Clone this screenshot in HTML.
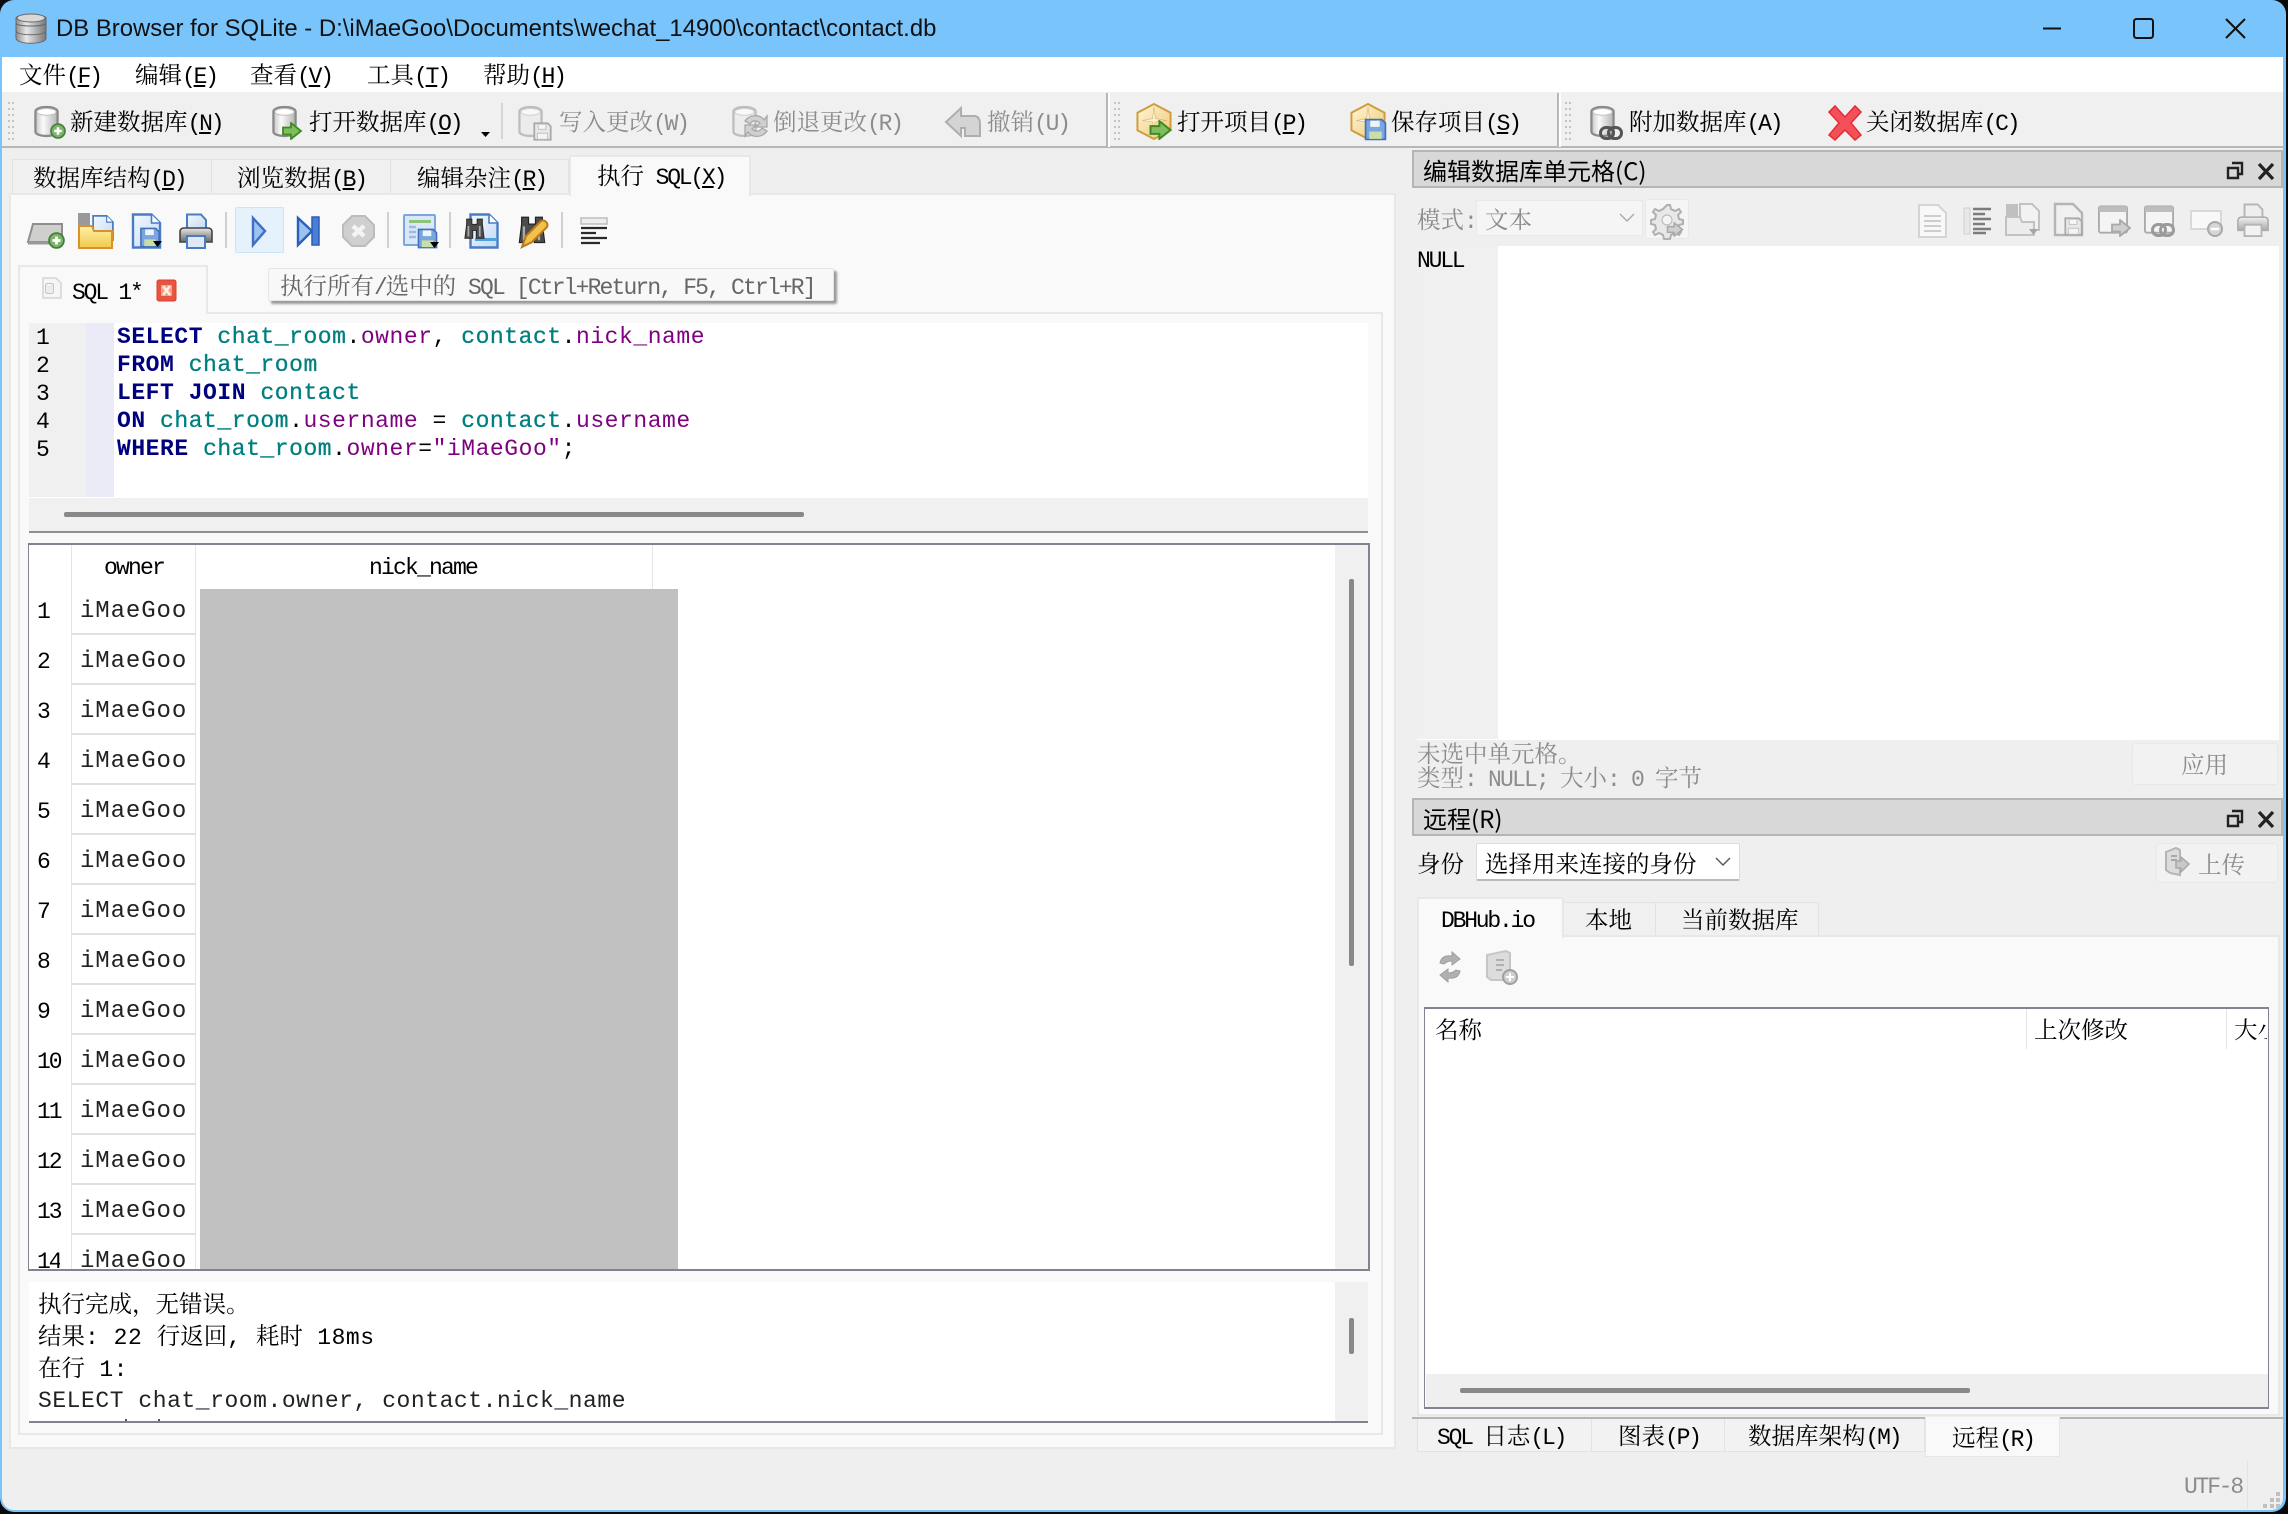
<!DOCTYPE html>
<html lang="zh"><head><meta charset="utf-8"><title>DB Browser for SQLite</title>
<style>
html,body{margin:0;padding:0;background:#0a0a0a;width:2288px;height:1514px;overflow:hidden}
#w{position:absolute;left:0;top:0;width:2286px;height:1512px;background:#79c4fb;border-radius:14px;overflow:hidden}
.b{position:absolute;box-sizing:border-box}
.t{position:absolute;white-space:pre;height:30px;line-height:30px;font-size:23.5px;color:#000;font-family:"Noto Serif CJK SC","Liberation Serif",serif}
.t i{font-style:normal;font-family:"Liberation Mono",monospace;font-size:23px;letter-spacing:-2.2px}
.t u{text-underline-offset:2px}
.g{color:#8c8c8c}
.s{font-family:"Noto Sans CJK SC","Liberation Sans",sans-serif;font-size:24px}
.c{position:absolute;white-space:pre;height:28px;font:23px/28px "Liberation Mono",monospace;letter-spacing:.54px;color:#000}
.c b{color:#00007f}.c a{color:#007f7f;-webkit-text-stroke:.3px #007f7f}.c em{font-style:normal;color:#7f007f}
.t i.m{font-family:"Liberation Mono",monospace;font-size:23px;letter-spacing:.54px}
.r{position:absolute;white-space:pre;font:24px/30px "Liberation Mono",monospace;letter-spacing:.9px;color:#222;left:80px}
.n{position:absolute;white-space:pre;font:23px/30px "Liberation Mono",monospace;letter-spacing:-2.1px;color:#000;left:37px}
</style></head><body>
<div id="w">
<!-- content background -->
<div class="b" style="left:2px;top:57px;width:2281px;height:1453px;background:#efefef;border-radius:0 0 12px 12px"></div>
<!-- menu -->
<div class="b" style="left:2px;top:57px;width:2281px;height:36px;background:#fff"></div>
<div class="b" style="left:2px;top:92px;width:2281px;height:2px;background:#f0f0f0"></div>
<!-- toolbar -->
<div class="b" style="left:2px;top:94px;width:2281px;height:52px;background:#f0f0f0"></div>
<div class="b" style="left:2px;top:146px;width:2281px;height:2px;background:#b7b7b7"></div>
<div class="b" style="left:1106px;top:93px;width:2px;height:54px;background:#b7b7b7"></div>
<div class="b" style="left:1108px;top:93px;width:2px;height:54px;background:#fff"></div>
<div class="b" style="left:1557px;top:93px;width:2px;height:54px;background:#b7b7b7"></div>
<div class="b" style="left:1559px;top:93px;width:2px;height:54px;background:#fff"></div>
<!-- left pane -->
<div class="b" style="left:12px;top:159px;width:200px;height:36px;background:#f0f0f0;border:1px solid #e2e2e2"></div>
<div class="b" style="left:212px;top:159px;width:179px;height:36px;background:#f0f0f0;border:1px solid #e2e2e2;border-left:0"></div>
<div class="b" style="left:391px;top:159px;width:178px;height:36px;background:#f0f0f0;border:1px solid #e2e2e2;border-left:0"></div>
<div class="b" style="left:9px;top:193px;width:1387px;height:1256px;background:#f9f9f9;border:2px solid #e8e8e8"></div>
<div class="b" style="left:569px;top:155px;width:182px;height:41px;background:#f9f9f9;border:2px solid #e8e8e8;border-bottom:0"></div>
<div class="b" style="left:18px;top:312px;width:1365px;height:1123px;background:#f9f9f9;border:2px solid #e8e8e8"></div>
<div class="b" style="left:18px;top:265px;width:190px;height:49px;background:#f9f9f9;border:2px solid #e8e8e8;border-bottom:0"></div>
<!-- exec hover -->
<div class="b" style="left:235px;top:207px;width:49px;height:46px;background:#e5f1fb;border:1px solid #cce4f7;border-radius:2px"></div>
<!-- tooltip -->
<div class="b" style="left:268px;top:268px;width:566px;height:33px;background:#f8f8f8;border:1px solid #e6e6e6;border-radius:2px;box-shadow:3px 3px 2px #9a9a9a"></div>
<!-- editor -->
<div class="b" style="left:29px;top:323px;width:1339px;height:175px;background:#fff"></div>
<div class="b" style="left:29px;top:323px;width:57px;height:174px;background:#f0f0f0"></div>
<div class="b" style="left:86px;top:323px;width:28px;height:174px;background:#ebebf7"></div>
<div class="b" style="left:29px;top:498px;width:1339px;height:33px;background:#f0f0f0"></div>
<div class="b" style="left:64px;top:512px;width:740px;height:5px;background:#888;border-radius:2px"></div>
<div class="b" style="left:29px;top:531px;width:1339px;height:2px;background:#8f8f8f"></div>
<!-- table -->
<div class="b" style="left:28px;top:543px;width:1342px;height:728px;background:#fff;border:2px solid #83838f;border-left-width:1px"></div>
<div class="b" style="left:1335px;top:545px;width:33px;height:724px;background:#f0f0f0"></div>
<div class="b" style="left:1349px;top:579px;width:5px;height:387px;background:#888;border-radius:2px"></div>
<div class="b" style="left:71px;top:545px;width:1px;height:724px;background:#e4e4e4"></div>
<div class="b" style="left:195px;top:545px;width:1px;height:724px;background:#e4e4e4"></div>
<div class="b" style="left:652px;top:545px;width:1px;height:44px;background:#e4e4e4"></div>
<div class="b" style="left:71px;top:633px;width:125px;height:2px;background:#e0e0e0"></div>
<div class="b" style="left:71px;top:683px;width:125px;height:2px;background:#e0e0e0"></div>
<div class="b" style="left:71px;top:733px;width:125px;height:2px;background:#e0e0e0"></div>
<div class="b" style="left:71px;top:783px;width:125px;height:2px;background:#e0e0e0"></div>
<div class="b" style="left:71px;top:833px;width:125px;height:2px;background:#e0e0e0"></div>
<div class="b" style="left:71px;top:883px;width:125px;height:2px;background:#e0e0e0"></div>
<div class="b" style="left:71px;top:933px;width:125px;height:2px;background:#e0e0e0"></div>
<div class="b" style="left:71px;top:983px;width:125px;height:2px;background:#e0e0e0"></div>
<div class="b" style="left:71px;top:1033px;width:125px;height:2px;background:#e0e0e0"></div>
<div class="b" style="left:71px;top:1083px;width:125px;height:2px;background:#e0e0e0"></div>
<div class="b" style="left:71px;top:1133px;width:125px;height:2px;background:#e0e0e0"></div>
<div class="b" style="left:71px;top:1183px;width:125px;height:2px;background:#e0e0e0"></div>
<div class="b" style="left:71px;top:1233px;width:125px;height:2px;background:#e0e0e0"></div>
<div class="b" style="left:200px;top:589px;width:478px;height:680px;background:#c1c1c1"></div>
<!-- results -->
<div class="b" style="left:29px;top:1282px;width:1339px;height:141px;background:#fff;border-bottom:2px solid #83838f;overflow:hidden">
  <div class="b" style="left:96px;top:137px;width:2px;height:2px;background:#555"></div>
  <div class="b" style="left:129px;top:137px;width:2px;height:2px;background:#555"></div>
</div>
<div class="b" style="left:1335px;top:1282px;width:33px;height:139px;background:#f0f0f0"></div>
<div class="b" style="left:1349px;top:1318px;width:5px;height:36px;background:#888;border-radius:2px"></div>

<!-- right dock -->
<div class="b" style="left:1412px;top:150px;width:871px;height:38px;background:#d8d8d8;border:2px solid #b5b5b5"></div>
<div class="b" style="left:1476px;top:200px;width:167px;height:36px;background:#f5f5f5;border:1px solid #e8e8e8;border-radius:2px"></div>
<div class="b" style="left:1645px;top:199px;width:44px;height:40px;background:#f5f5f5;border:1px solid #e8e8e8;border-radius:3px"></div>
<div class="b" style="left:1417px;top:246px;width:862px;height:494px;background:#fff"></div>
<div class="b" style="left:1417px;top:246px;width:81px;height:493px;background:#f0f0f0"></div>
<div class="b" style="left:2132px;top:743px;width:146px;height:42px;background:#f2f2f2;border:1px solid #e8e8e8;border-radius:3px"></div>
<div class="b" style="left:1412px;top:798px;width:871px;height:38px;background:#d8d8d8;border:2px solid #b5b5b5"></div>
<div class="b" style="left:1476px;top:843px;width:264px;height:38px;background:#fff;border:1px solid #dcdcdc;border-bottom:2px solid #bbb;border-radius:2px"></div>
<div class="b" style="left:2156px;top:843px;width:122px;height:40px;background:#f2f2f2;border:1px solid #e8e8e8;border-radius:3px"></div>
<!-- remote tabs -->
<div class="b" style="left:1564px;top:902px;width:92px;height:34px;background:#f0f0f0;border:1px solid #e2e2e2;border-left:0"></div>
<div class="b" style="left:1656px;top:902px;width:163px;height:34px;background:#f0f0f0;border:1px solid #e2e2e2;border-left:0"></div>
<div class="b" style="left:1417px;top:935px;width:863px;height:481px;background:#f9f9f9;border:2px solid #e8e8e8"></div>
<div class="b" style="left:1417px;top:897px;width:147px;height:41px;background:#f9f9f9;border:2px solid #e8e8e8;border-bottom:0"></div>
<div class="b" style="left:1424px;top:1007px;width:845px;height:402px;background:#fff;border:2px solid #83838f;border-width:2px 1px"></div>
<div class="b" style="left:1426px;top:1374px;width:842px;height:33px;background:#efefef"></div>
<div class="b" style="left:1460px;top:1388px;width:510px;height:5px;background:#888;border-radius:2px"></div>
<div class="b" style="left:2026px;top:1009px;width:1px;height:40px;background:#e4e4e4"></div>
<div class="b" style="left:2226px;top:1009px;width:1px;height:40px;background:#e4e4e4"></div>
<!-- bottom tabs -->
<div class="b" style="left:1412px;top:1417px;width:871px;height:2px;background:#b5b5b5"></div>
<div class="b" style="left:1417px;top:1419px;width:175px;height:33px;background:#f2f2f2;border:1px solid #e2e2e2;border-top:0"></div>
<div class="b" style="left:1592px;top:1419px;width:133px;height:33px;background:#f2f2f2;border:1px solid #e2e2e2;border-top:0;border-left:0"></div>
<div class="b" style="left:1725px;top:1419px;width:200px;height:33px;background:#f2f2f2;border:1px solid #e2e2e2;border-top:0;border-left:0"></div>
<div class="b" style="left:1925px;top:1417px;width:135px;height:40px;background:#f9f9f9;border:1px solid #e6e6e6;border-top:0"></div>
<div class="b" style="left:2247px;top:1461px;width:1px;height:48px;background:#e2e2e2"></div>

<!-- icons -->
<svg class="b" style="left:0;top:0" width="2288" height="1514" viewBox="0 0 2288 1514">
<defs>
<linearGradient id="cg" x1="0" x2="1" y1="0" y2="0"><stop offset="0" stop-color="#c8c8c8"/><stop offset=".35" stop-color="#fafafa"/><stop offset="1" stop-color="#b4b4b4"/></linearGradient>
<linearGradient id="dg" x1="0" x2="1" y1="0" y2="0"><stop offset="0" stop-color="#8e8e8e"/><stop offset=".35" stop-color="#e8e8e8"/><stop offset="1" stop-color="#777"/></linearGradient>
<linearGradient id="fy" x1="0" x2="0" y1="0" y2="1"><stop offset="0" stop-color="#fff0a8"/><stop offset="1" stop-color="#f2c94c"/></linearGradient>
<linearGradient id="bp" x1="0" x2="1" y1="0" y2="1"><stop offset="0" stop-color="#f4f9ff"/><stop offset="1" stop-color="#c2d9f4"/></linearGradient>
<linearGradient id="hx" x1="0" x2="1" y1="0" y2="1"><stop offset="0" stop-color="#fff6d8"/><stop offset="1" stop-color="#eec873"/></linearGradient>
<linearGradient id="pr" x1="0" x2="0" y1="0" y2="1"><stop offset="0" stop-color="#e8e8e8"/><stop offset="1" stop-color="#666"/></linearGradient>
<linearGradient id="gp" x1="0" x2="0" y1="0" y2="1"><stop offset="0" stop-color="#f0f0f0"/><stop offset="1" stop-color="#aaa"/></linearGradient>
<symbol id="cyl" viewBox="0 0 26 34"><path d="M1.5 6.5C1.5 .5 24.5 .5 24.5 6.5V27.5C24.5 33.5 1.5 33.5 1.5 27.5Z" fill="url(#cg)" stroke="#8a8a8a" stroke-width="2.4"/><ellipse cx="13" cy="7" rx="10" ry="3.5" fill="#fff" stroke="#c0c0c0"/></symbol>
<symbol id="cylg" viewBox="0 0 26 34"><path d="M1.5 6.5C1.5 .5 24.5 .5 24.5 6.5V27.5C24.5 33.5 1.5 33.5 1.5 27.5Z" fill="#ececec" stroke="#bdbdbd" stroke-width="2.4"/><ellipse cx="13" cy="7" rx="10" ry="3.5" fill="#f8f8f8" stroke="#d0d0d0"/></symbol>
<symbol id="plus" viewBox="0 0 16 16"><circle cx="8" cy="8" r="7" fill="#7db36a" stroke="#3f7f35" stroke-width="1.6"/><path d="M8 4.2V11.8M4.2 8H11.8" stroke="#fff" stroke-width="2.6"/></symbol>
<symbol id="arr" viewBox="0 0 20 18"><path d="M1 5.5H9V1L19 9 9 17V12.5H1Z" fill="#7fbe5e" stroke="#3f8a22" stroke-width="1.8"/></symbol>
<symbol id="arrg" viewBox="0 0 20 18"><path d="M1 5.5H9V1L19 9 9 17V12.5H1Z" fill="#cfcfcf" stroke="#a8a8a8" stroke-width="1.8"/></symbol>
<symbol id="disk" viewBox="0 0 22 22"><path d="M1.5 1.5H17L20.5 5V20.5H1.5Z" fill="#7aa5de" stroke="#3f70bd" stroke-width="1.6"/><rect x="6" y="2.5" width="9" height="6" fill="#eef4fb"/><rect x="5" y="13" width="12" height="7" fill="#c8e0a8"/></symbol>
<symbol id="diskg" viewBox="0 0 22 22"><path d="M1.5 1.5H17L20.5 5V20.5H1.5Z" fill="#e8e8e8" stroke="#a8a8a8" stroke-width="2"/><rect x="6" y="2.5" width="9" height="6" fill="#f6f6f6" stroke="#bbb"/><rect x="5" y="13" width="12" height="7" fill="#f4f4f4" stroke="#bbb"/></symbol>
<symbol id="page" viewBox="0 0 30 36"><path d="M1.5 1.5H20L28.5 10V34.5H1.5Z" fill="url(#bp)" stroke="#4a7cc4" stroke-width="2.4"/><path d="M20 1.5V10H28.5" fill="#fff" stroke="#4a7cc4" stroke-width="1.6"/></symbol>
<symbol id="hex" viewBox="0 0 36 38"><path d="M18 1L35 10V28L18 37 1 28V10Z" fill="url(#hx)" stroke="#cf9c3d" stroke-width="2"/><path d="M18 4L19.5 16 31 18 19 19.5 18 30 16.6 19.5 6 18 16.6 16Z" fill="#fff" opacity=".55" stroke="#c08c30" stroke-width=".6"/></symbol>
<symbol id="bino" viewBox="0 0 24 26"><path d="M3 1H9V7H15V1H21V7L23 23H14V14H10V23H1L3 7Z" fill="#4c4c4c" stroke="#222" stroke-width="1"/><path d="M5 9V21M18 9V21" stroke="#aaa" stroke-width="2"/></symbol>
<symbol id="prt" viewBox="0 0 36 36"><path d="M9 16V1.5H23L28 7V16Z" fill="url(#bp)" stroke="#4a7cc4" stroke-width="2"/><path d="M2 29V19C2 16 4 15 6 15H30C32 15 34 16 34 19V29H27V25H9V29Z" fill="url(#pr)" stroke="#444" stroke-width="1.6"/><rect x="9" y="23" width="18" height="12" fill="#dfe9f6" stroke="#4a7cc4" stroke-width="2"/></symbol>
<symbol id="prtg" viewBox="0 0 36 36"><path d="M9 16V1.5H23L28 7V16Z" fill="#eee" stroke="#b5b5b5" stroke-width="2"/><path d="M2 29V19C2 16 4 15 6 15H30C32 15 34 16 34 19V29H27V25H9V29Z" fill="url(#gp)" stroke="#aaa" stroke-width="1.6"/><rect x="9" y="23" width="18" height="12" fill="#f2f2f2" stroke="#b5b5b5" stroke-width="2"/></symbol>
<symbol id="lnk" viewBox="0 0 24 14"><rect x="1.5" y="1.5" width="13" height="11" rx="5.5" fill="none" stroke="#555" stroke-width="3"/><rect x="9.5" y="1.5" width="13" height="11" rx="5.5" fill="none" stroke="#555" stroke-width="3"/></symbol>
<symbol id="lnkg" viewBox="0 0 24 14"><rect x="1.5" y="1.5" width="13" height="11" rx="5.5" fill="none" stroke="#9a9a9a" stroke-width="3"/><rect x="9.5" y="1.5" width="13" height="11" rx="5.5" fill="none" stroke="#9a9a9a" stroke-width="3"/></symbol>
<symbol id="win" viewBox="0 0 32 30"><rect x="1" y="1" width="30" height="28" rx="2" fill="#f4f4f4" stroke="#aaa" stroke-width="2"/><rect x="1" y="1" width="30" height="6" fill="#bdbdbd"/></symbol>
</defs>
<!-- title icon -->
<g stroke="#666" stroke-width="1"><path d="M16 33C16 29 46 29 46 33V38C46 45 16 45 16 38Z" fill="url(#dg)"/><path d="M16 24C16 20 46 20 46 24V31C46 36 16 36 16 31Z" fill="url(#dg)"/><path d="M16 18C16 14 46 14 46 18V23C46 27 16 27 16 23Z" fill="url(#dg)"/><ellipse cx="31" cy="18" rx="14" ry="4" fill="#d8d8d8"/></g>
<!-- window buttons -->
<path d="M2043 28.5H2061" stroke="#111" stroke-width="2"/>
<rect x="2134" y="19" width="19" height="19" rx="2.5" fill="none" stroke="#111" stroke-width="2"/>
<path d="M2226 19L2245 38M2245 19L2226 38" stroke="#111" stroke-width="2"/>
<!-- grips -->
<g fill="#c4c4c4"><path d="M8 102h2v2h-2zM12 102h2v2h-2zM8 108h2v2h-2zM12 108h2v2h-2zM8 114h2v2h-2zM12 114h2v2h-2zM8 120h2v2h-2zM12 120h2v2h-2zM8 126h2v2h-2zM12 126h2v2h-2zM8 132h2v2h-2zM12 132h2v2h-2zM8 138h2v2h-2zM12 138h2v2h-2z"/><path d="M1114 102h2v2h-2zM1118 102h2v2h-2zM1114 108h2v2h-2zM1118 108h2v2h-2zM1114 114h2v2h-2zM1118 114h2v2h-2zM1114 120h2v2h-2zM1118 120h2v2h-2zM1114 126h2v2h-2zM1118 126h2v2h-2zM1114 132h2v2h-2zM1118 132h2v2h-2zM1114 138h2v2h-2zM1118 138h2v2h-2z"/><path d="M1565 102h2v2h-2zM1569 102h2v2h-2zM1565 108h2v2h-2zM1569 108h2v2h-2zM1565 114h2v2h-2zM1569 114h2v2h-2zM1565 120h2v2h-2zM1569 120h2v2h-2zM1565 126h2v2h-2zM1569 126h2v2h-2zM1565 132h2v2h-2zM1569 132h2v2h-2zM1565 138h2v2h-2zM1569 138h2v2h-2z"/></g>
<!-- toolbar 1 -->
<use href="#cyl" x="34" y="105" width="25" height="33"/><use href="#plus" x="50" y="123" width="16" height="16"/>
<use href="#cyl" x="272" y="105" width="25" height="33"/><use href="#arr" x="281" y="122" width="22" height="18"/>
<path d="M481 132h9l-4.500 5z" fill="#000"/>
<rect x="501" y="103" width="2" height="36" fill="#d5d5d5"/>
<use href="#cylg" x="518" y="105" width="25" height="33"/><use href="#diskg" x="532" y="122" width="21" height="19"/>
<use href="#cylg" x="732" y="105" width="25" height="33"/><path d="M745 121C750 114 760 114 764 120L767 116V127H756L760 123C757 120 752 120 750 124ZM767 131C762 138 752 138 748 132L745 136V125H756L752 129C755 132 760 132 762 128Z" fill="#d0d0d0" stroke="#a8a8a8" stroke-width="1.300"/>
<path d="M946 122L961 108V116H974C980 116 980 122 980 126V136H965V128H961V136Z" fill="#d4d4d4" stroke="#aeaeae" stroke-width="2"/>
<use href="#hex" x="1136" y="103" width="36" height="37"/><use href="#arr" x="1149" y="120" width="23" height="20"/>
<use href="#hex" x="1350" y="103" width="36" height="37"/><use href="#disk" x="1364" y="118" width="23" height="23"/>
<use href="#cyl" x="1590" y="105" width="25" height="33"/><use href="#lnk" x="1597" y="126" width="28" height="14"/>
<path d="M1829 112l6-6 10 11 10-11 6 6-10 11 10 12-6 5-10-10-10 10-6-5 10-12z" fill="#f4505a" stroke="#e42c36" stroke-width="1.500"/>
<!-- toolbar 2 -->
<path d="M28 242L33 224H62V242Z" fill="#cfcfcc" stroke="#8e8e8e" stroke-width="2"/><path d="M28 243H60" stroke="#999" stroke-width="3"/><use href="#plus" x="48" y="232" width="17" height="17"/>
<rect x="78" y="213" width="12" height="17" fill="#999"/><use href="#page" x="92" y="213" width="22" height="30"/>
<path d="M79 226H92L94 231H112V248H79Z" fill="url(#fy)" stroke="#d9922a" stroke-width="2"/>
<use href="#page" x="130" y="213" width="33" height="36"/><use href="#disk" x="139" y="227" width="22" height="21"/><path d="M153 241h9l-4.500 6z" fill="#000"/>
<use href="#prt" x="178" y="213" width="36" height="36"/>
<rect x="225" y="212" width="2" height="36" fill="#d0d0d0"/>
<path d="M253 218L265 231 253 245Z" fill="#9dc2f0" stroke="#3f6ec4" stroke-width="2.400"/>
<path d="M298 218L312 231 298 245Z" fill="#9dc2f0" stroke="#2b5fbd" stroke-width="2.400"/><rect x="312" y="217" width="7" height="28" fill="#4a7fd4" stroke="#2b5fbd" stroke-width="1.500"/>
<path d="M352 216H365L374 225V237L365 246H352L343 237V225Z" fill="#cfcfcf" stroke="#bcbcbc" stroke-width="2"/><path d="M353 226L364 236M364 226L353 236" stroke="#f4f4f4" stroke-width="4.500"/>
<rect x="387" y="212" width="2" height="36" fill="#d0d0d0"/>
<rect x="404" y="215" width="31" height="30" rx="1" fill="#dbe8f8" stroke="#7ea6de" stroke-width="2"/><rect x="409" y="220" width="22" height="3" fill="#8cc47a"/><path d="M409 227h7M409 232h7M409 237h7" stroke="#9dbbe4" stroke-width="2.500"/><use href="#disk" x="416" y="228" width="23" height="21"/><path d="M430 242h9l-4.500 6z" fill="#000"/>
<rect x="449" y="212" width="2" height="36" fill="#d0d0d0"/>
<use href="#page" x="468" y="213" width="32" height="36"/><rect x="475" y="238" width="22" height="3" fill="#4aa3e0"/><use href="#bino" x="464" y="218" width="21" height="23"/>
<use href="#bino" x="516" y="216" width="32" height="30"/><path d="M522 247L526 236 541 221C544 219 549 223 547 227L532 242Z" fill="#f0c24a" stroke="#b87a1e" stroke-width="2"/>
<rect x="561" y="212" width="2" height="36" fill="#d0d0d0"/>
<rect x="581" y="218" width="26" height="6" fill="#eee" stroke="#bdbdbd" stroke-width="1.500"/><path d="M581 228H607M581 233H596M581 238H607M581 243H600" stroke="#2a2a2a" stroke-width="2.200"/>
<!-- sql tab icon + close -->
<path d="M43 278H56L61 283V298H43Z" fill="#f6f6f6" stroke="#d4d4d4" stroke-width="1.500"/><use href="#cylg" x="45" y="281" width="9" height="15"/>
<rect x="157" y="280" width="19" height="21" rx="2" fill="#e8553f" stroke="#d8402c"/><rect x="161" y="285" width="11" height="11" fill="#f2a08e"/><path d="M163 286L170 295M170 286L163 295" stroke="#fbf0e4" stroke-width="2.400"/>
<!-- dock float/close -->
<path d="M2232 163h10v11h-4M2228 168h10v10h-10z" fill="none" stroke="#222" stroke-width="2.400"/><path d="M2259 164L2273 179M2273 164L2259 179" stroke="#222" stroke-width="3.200"/>
<path d="M2232 811h10v11h-4M2228 816h10v10h-10z" fill="none" stroke="#222" stroke-width="2.400"/><path d="M2259 812L2273 827M2273 812L2259 827" stroke="#222" stroke-width="3.200"/>
<!-- combo chevrons -->
<path d="M1620 214l7 7 7-7" fill="none" stroke="#a9a9a9" stroke-width="1.400"/>
<path d="M1716 858l7 7 7-7" fill="none" stroke="#555" stroke-width="1.400"/>
<!-- gear -->
<path d="M1667 205l3 0 1 4 4 2 4-2 2 3-3 3 1 4 4 1v4l-4 1-1 4 3 3-2 3-4-2-4 2-1 4h-6l-1-4-4-2-4 2-2-3 3-3-1-4-4-1v-4l4-1 1-4-3-3 2-3 4 2 4-2z" fill="#e8e8e8" stroke="#b0b0b0" stroke-width="2"/><circle cx="1667" cy="220" r="5" fill="#f4f4f4" stroke="#b5b5b5"/><use href="#arrg" x="1666" y="222" width="18" height="15"/>
<!-- edit cell icons -->
<path d="M1919 205H1938L1946 213V237H1919Z" fill="#f8f8f8" stroke="#d4d4d4" stroke-width="2"/><path d="M1924 216H1941M1924 221H1941M1924 226H1941M1924 231H1941" stroke="#cdcdcd" stroke-width="2"/>
<rect x="1964" y="208" width="6" height="26" fill="#e8e8e8" stroke="#cfcfcf"/><path d="M1973 209H1991M1973 214H1985M1973 219H1991M1973 224H1985M1973 229H1991M1973 233H1986" stroke="#7c7c7c" stroke-width="2.400"/>
<rect x="2006" y="204" width="12" height="17" fill="#c0c0c0"/><path d="M2020 204H2032L2039 211V230H2020Z" fill="#f2f2f2" stroke="#c2c2c2" stroke-width="2"/><path d="M2006 217H2020L2022 222H2034V235H2006Z" fill="#ececec" stroke="#c2c2c2" stroke-width="2"/><path d="M2029 229h9l-4.500 6z" fill="#a6a6a6"/>
<path d="M2055 204H2073L2082 213V235H2055Z" fill="#f0f0f0" stroke="#b5b5b5" stroke-width="2.400"/><use href="#diskg" x="2063" y="217" width="21" height="19"/>
<use href="#win" x="2098" y="205" width="30" height="29"/><use href="#arrg" x="2111" y="219" width="20" height="18"/>
<use href="#win" x="2144" y="205" width="30" height="29"/><use href="#lnkg" x="2149" y="223" width="28" height="14"/>
<rect x="2191" y="211" width="30" height="18" fill="#f8f8f8" stroke="#d8d8d8" stroke-width="2"/><circle cx="2215" cy="229" r="7" fill="#d6d6d6" stroke="#a8a8a8" stroke-width="2"/><path d="M2211 229H2219" stroke="#fff" stroke-width="2.400"/>
<use href="#prtg" x="2236" y="203" width="34" height="34"/>
<!-- remote icons -->
<path d="M2166 852L2176 848 2180 850V875L2170 873 2166 870Z" fill="#dcdcdc" stroke="#b5b5b5" stroke-width="2"/><path d="M2171 856h6M2171 860h6" stroke="#a8a8a8" stroke-width="2"/><path d="M2176 861h5v-4l8 7-8 8v-4h-5z" fill="#c8c8c8" stroke="#a8a8a8" stroke-width="1.500"/>
<path d="M1440 963C1441 957 1446 955 1452 956V952L1460 959 1452 965V961C1448 961 1446 962 1444 964Z" fill="#b0b0b0" stroke="#a0a0a0"/><path d="M1460 971C1459 977 1454 979 1448 978V982L1440 975 1448 969V973C1452 973 1454 972 1456 970Z" fill="#b0b0b0" stroke="#a0a0a0"/>
<path d="M1487 955L1506 951 1510 953V980H1491L1487 977Z" fill="#dcdcdc" stroke="#c6c6c6" stroke-width="2"/><path d="M1496 960H1504M1496 965H1504M1496 970H1502" stroke="#b0b0b0" stroke-width="2"/><circle cx="1510" cy="977" r="7" fill="#cfcfcf" stroke="#a0a0a0" stroke-width="2"/><path d="M1510 973V981M1506 977H1514" stroke="#fff" stroke-width="2"/>
<!-- size grip -->
<g fill="#c0c0c0"><rect x="2276" y="1492" width="4" height="4"/><rect x="2276" y="1498" width="4" height="4"/><rect x="2270" y="1498" width="4" height="4"/><rect x="2276" y="1504" width="4" height="4"/><rect x="2270" y="1504" width="4" height="4"/><rect x="2263" y="1504" width="4" height="4"/></g>
</svg>

<!-- title -->
<div class="t" style="left:56px;top:14px;font:23.9px/30px 'Liberation Sans',sans-serif;color:#111">DB Browser for SQLite - D:\iMaeGoo\Documents\wechat_14900\contact\contact.db</div>
<!-- menu -->
<div class="t" style="left:19px;top:58px">文件<i>(<u>F</u>)</i></div>
<div class="t" style="left:135px;top:58px">编辑<i>(<u>E</u>)</i></div>
<div class="t" style="left:250px;top:58px">查看<i>(<u>V</u>)</i></div>
<div class="t" style="left:367px;top:58px">工具<i>(<u>T</u>)</i></div>
<div class="t" style="left:483px;top:58px">帮助<i>(<u>H</u>)</i></div>
<!-- toolbar text -->
<div class="t" style="left:70px;top:105px">新建数据库<i>(<u>N</u>)</i></div>
<div class="t" style="left:309px;top:105px">打开数据库<i>(<u>O</u>)</i></div>
<div class="t g" style="left:559px;top:105px">写入更改<i>(W)</i></div>
<div class="t g" style="left:773px;top:105px">倒退更改<i>(R)</i></div>
<div class="t g" style="left:987px;top:105px">撤销<i>(U)</i></div>
<div class="t" style="left:1177px;top:105px">打开项目<i>(<u>P</u>)</i></div>
<div class="t" style="left:1391px;top:105px">保存项目<i>(<u>S</u>)</i></div>
<div class="t" style="left:1629px;top:105px">附加数据库<i>(A)</i></div>
<div class="t" style="left:1866px;top:105px">关闭数据库<i>(C)</i></div>
<!-- tabs -->
<div class="t" style="left:33px;top:161px">数据库结构<i>(<u>D</u>)</i></div>
<div class="t" style="left:237px;top:161px">浏览数据<i>(<u>B</u>)</i></div>
<div class="t" style="left:417px;top:161px">编辑杂注<i>(<u>R</u>)</i></div>
<div class="t" style="left:597px;top:159px">执行<i> SQL(<u>X</u>)</i></div>
<div class="t" style="left:72px;top:274px"><i>SQL 1*</i></div>
<div class="t" style="left:280px;top:269px;color:#666">执行所有<i>/</i>选中的<i style="letter-spacing:-1.850px"> SQL [Ctrl+Return, F5, Ctrl+R]</i></div>
<!-- line numbers -->
<div class="n" style="left:36px;top:323px">1</div><div class="n" style="left:36px;top:351px">2</div><div class="n" style="left:36px;top:379px">3</div><div class="n" style="left:36px;top:407px">4</div><div class="n" style="left:36px;top:435px">5</div>
<!-- code -->
<div class="c" style="left:117px;top:323px"><b>SELECT</b> <a>chat_room</a>.<em>owner</em>, <a>contact</a>.<em>nick_name</em></div>
<div class="c" style="left:117px;top:351px"><b>FROM</b> <a>chat_room</a></div>
<div class="c" style="left:117px;top:379px"><b>LEFT JOIN</b> <a>contact</a></div>
<div class="c" style="left:117px;top:407px"><b>ON</b> <a>chat_room</a>.<em>username</em> = <a>contact</a>.<em>username</em></div>
<div class="c" style="left:117px;top:435px"><b>WHERE</b> <a>chat_room</a>.<em>owner</em>=<em>"iMaeGoo"</em>;</div>
<!-- table -->
<div class="t" style="left:104px;top:549px"><i style="letter-spacing:-1.800px">owner</i></div>
<div class="t" style="left:369px;top:549px"><i style="letter-spacing:-1.800px">nick_name</i></div>
<div class="n" style="top:597px">1</div><div class="r" style="top:597px">iMaeGoo</div>
<div class="n" style="top:647px">2</div><div class="r" style="top:647px">iMaeGoo</div>
<div class="n" style="top:697px">3</div><div class="r" style="top:697px">iMaeGoo</div>
<div class="n" style="top:747px">4</div><div class="r" style="top:747px">iMaeGoo</div>
<div class="n" style="top:797px">5</div><div class="r" style="top:797px">iMaeGoo</div>
<div class="n" style="top:847px">6</div><div class="r" style="top:847px">iMaeGoo</div>
<div class="n" style="top:897px">7</div><div class="r" style="top:897px">iMaeGoo</div>
<div class="n" style="top:947px">8</div><div class="r" style="top:947px">iMaeGoo</div>
<div class="n" style="top:997px">9</div><div class="r" style="top:997px">iMaeGoo</div>
<div class="n" style="top:1047px">10</div><div class="r" style="top:1047px">iMaeGoo</div>
<div class="n" style="top:1097px">11</div><div class="r" style="top:1097px">iMaeGoo</div>
<div class="n" style="top:1147px">12</div><div class="r" style="top:1147px">iMaeGoo</div>
<div class="n" style="top:1197px">13</div><div class="r" style="top:1197px">iMaeGoo</div>
<div class="n" style="top:1247px;height:22px;overflow:hidden">14</div><div class="r" style="top:1247px;height:22px;overflow:hidden">iMaeGoo</div>
<!-- results -->
<div class="t" style="left:38px;top:1287px">执行完成，无错误。</div>
<div class="t" style="left:38px;top:1319px">结果<i class="m">: 22 </i>行返回<i class="m">, </i>耗时<i class="m"> 18ms</i></div>
<div class="t" style="left:38px;top:1351px">在行<i class="m"> 1:</i></div>
<div class="c" style="left:38px;top:1387px;color:#222">SELECT chat_room.owner, contact.nick_name</div>
<!-- dock title -->
<div class="t s" style="left:1423px;top:155px">编辑数据库单元格(C)</div>
<div class="t g" style="left:1417px;top:203px">模式<i>:</i></div>
<div class="t g" style="left:1485px;top:203px">文本</div>
<div class="t" style="left:1417px;top:242px"><i>NULL</i></div>
<div class="t g" style="left:1417px;top:737px">未选中单元格。</div>
<div class="t g" style="left:1417px;top:761px">类型<i style="letter-spacing:-1.800px">: NULL; </i>大小<i style="letter-spacing:-1.800px">: 0 </i>字节</div>
<div class="t g" style="left:2181px;top:748px">应用</div>
<div class="t s" style="left:1423px;top:803px">远程(R)</div>
<div class="t" style="left:1417px;top:847px">身份</div>
<div class="t" style="left:1485px;top:847px">选择用来连接的身份</div>
<div class="t g" style="left:2198px;top:848px">上传</div>
<div class="t" style="left:1441px;top:902px"><i>DBHub.io</i></div>
<div class="t" style="left:1585px;top:903px">本地</div>
<div class="t" style="left:1681px;top:903px">当前数据库</div>
<div class="t" style="left:1435px;top:1013px">名称</div>
<div class="t" style="left:2034px;top:1013px">上次修改</div>
<div class="b" style="left:2234px;top:1013px;width:33px;height:30px;overflow:hidden"><div class="t" style="left:0;top:0">大小</div></div>
<!-- bottom tabs -->
<div class="t" style="left:1437px;top:1419px"><i>SQL </i>日志<i>(L)</i></div>
<div class="t" style="left:1618px;top:1419px">图表<i>(P)</i></div>
<div class="t" style="left:1748px;top:1419px">数据库架构<i>(M)</i></div>
<div class="t" style="left:1952px;top:1421px">远程<i>(R)</i></div>
<div class="t g" style="left:2184px;top:1468px"><i>UTF-8</i></div>
</div>
</body></html>
